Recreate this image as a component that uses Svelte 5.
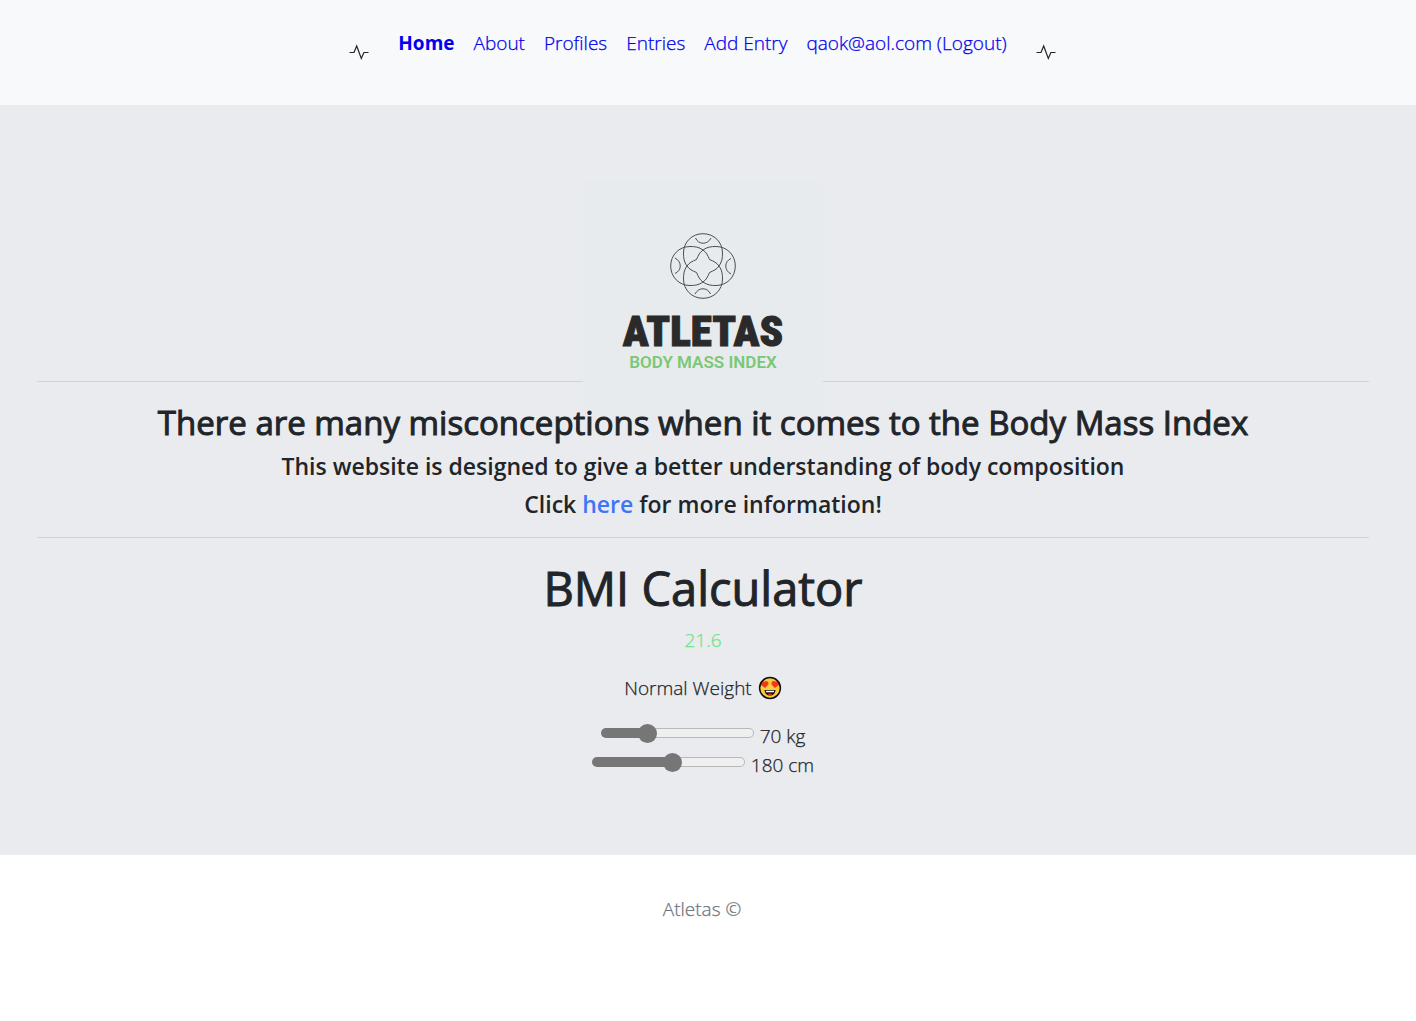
<script>
  let weight = $state(70);
  let height = $state(180);
  let bmi = $derived((weight / (height / 100) ** 2).toFixed(1));
  let fillWeight = $derived(((weight - 30) / 145) * 100);
  let fillHeight = $derived(((height - 100) / 150) * 100);
  const links = ['Home', 'About', 'Profiles', 'Entries', 'Add Entry', 'qaok@aol.com (Logout)'];
</script>

{#snippet pulse()}
  <svg class="pulse" width="20" height="20" viewBox="0 0 20 20" aria-hidden="true">
    <path d="M0.5 10.5H5L7.7 4L12.3 16.5L14.9 10.5H19.5" />
  </svg>
{/snippet}

<header>
  {@render pulse()}
  <nav>
    {#each links as link, i}
      <a href="#{i}" class:active={i === 0}>{link}</a>
    {/each}
  </nav>
  {@render pulse()}
</header>

<main>
  <div class="banner">
    <hr />
    <div class="logo">
      <svg class="mark" width="66" height="66" viewBox="0 0 66 66" aria-hidden="true">
        {#each [0, 90, 180, 270] as turn}
          <g transform="rotate({turn} 33 33)">
            <path d="M17 33C14 29 13.500 25 13.500 20C13.500 9 22 0.700 33 0.700C44 0.700 52.500 9 52.500 20C52.500 25 52 29 49 33" />
            <path d="M25.500 5C28.500 12 37.500 12 41 5" />
            <path d="M33 17C36.500 19.500 37.500 22 39.500 26.500C44 28.500 46.500 29.500 49 33" />
          </g>
        {/each}
      </svg>
      <span class="name">ATLETAS</span>
      <span class="tagline">BODY MASS INDEX</span>
    </div>
  </div>
  <h2>There are many misconceptions when it comes to the Body Mass Index</h2>
  <h4>This website is designed to give a better understanding of body composition</h4>
  <h4>Click <a href="#about">here</a> for more information!</h4>
  <hr class="divider" />
  <h1>BMI Calculator</h1>
  <p class="bmi">{bmi}</p>
  <p class="verdict">
    Normal Weight
    <svg width="24" height="24" viewBox="0 0 24 24" role="img" aria-label="Heart eyes">
      <circle cx="12" cy="12" r="10.200" fill="#ffc83d" />
      <path d="M7.200 12L2.500 8.800C1 6 4 3.500 6.300 5.800C8.500 3.800 11.500 6 10.200 8.800Z" fill="#f03a17" />
      <path d="M16.800 12L21.500 8.800C23 6 20 3.500 17.700 5.800C15.500 3.800 12.500 6 13.800 8.800Z" fill="#f03a17" />
      <path d="M6.500 14H17.500C17.300 17.500 15.200 19.500 12 19.500S6.700 17.500 6.500 14Z" fill="#111" />
      <path d="M7.700 14.800H16.300L15.800 16.300H8.200Z" fill="#fff" />
      <path d="M9.300 18.300Q12 16.800 14.700 18.300Q12 19.800 9.300 18.300Z" fill="#f03a17" />
      <circle cx="12" cy="12" r="10.400" fill="none" stroke="#111" stroke-width="1.500" />
    </svg>
  </p>
  <label class="slider">
    <input type="range" min="30" max="175" bind:value={weight} style:--fill="{fillWeight}%" />
    <span>{weight} kg</span>
  </label>
  <label class="slider">
    <input type="range" min="100" max="250" bind:value={height} style:--fill="{fillHeight}%" />
    <span>{height} cm</span>
  </label>
</main>

<footer>Atletas ©</footer>

<style>
  :global(body) {
    margin: 0;
    background: #fff;
    color: #212529;
    font: 300 19px/28px 'Open Sans', 'Noto Sans', sans-serif;
  }
  header {
    display: flex;
    justify-content: center;
    gap: 29px;
    padding: 29px 11px 43px 0;
    background: #f8f9fb;
  }
  nav { display: flex; gap: 19px; height: 33px; }
  a { color: #0000ee; text-decoration: none; }
  .active { font-weight: 700; }
  .pulse { margin-top: 13px; }
  .pulse path { fill: none; stroke: #212529; stroke-width: 1.200; }
  main {
    padding: 276px 47px 76px 37px;
    background: #eaebef;
    text-align: center;
  }
  hr { margin: 0; border: 0; border-top: 1px solid #d2d4d8; }
  .banner { position: relative; }
  .logo {
    position: absolute;
    left: 50%;
    bottom: -39px;
    display: flex;
    flex-direction: column;
    align-items: center;
    box-sizing: border-box;
    width: 240px;
    height: 240px;
    margin-left: -120px;
    padding-top: 52px;
    background: #e8ebee;
  }
  .mark { flex: none; }
  .mark path { fill: none; stroke: #4c4f52; stroke-width: 1; }
  .name {
    margin-top: 10px;
    color: #2a2a2a;
    font: 900 43px/44px 'Roboto Condensed', Roboto, sans-serif;
    -webkit-text-stroke: 1px;
  }
  .tagline {
    color: #7ac876;
    font: 600 17px/18px Roboto, sans-serif;
  }
  h1, h2, h4 { position: relative; margin: 0; }
  h1, h2 { font-weight: 400; -webkit-text-stroke: 1px; }
  h2 { margin-top: 19px; font-size: 33px; line-height: 44px; }
  h4 { margin-top: 8px; font-size: 23px; font-weight: 600; line-height: 30px; }
  h2 + h4 { margin-top: 6px; }
  h4 a { color: #3d76f7; }
  .divider { margin-top: 18px; }
  h1 { margin-top: 21px; font-size: 47px; line-height: 58px; }
  p { margin: 0; }
  nav a:not(.active), p, .slider, footer { -webkit-text-stroke: 0.25px; }
  .bmi { margin-top: 9px; color: #6be585; }
  .verdict {
    display: flex;
    justify-content: center;
    align-items: center;
    gap: 6px;
    margin: 20px 0 19px;
  }
  .slider { display: flex; justify-content: center; gap: 6px; height: 29px; }
  .slider span { padding-top: 1px; }
  input {
    appearance: none;
    width: 153px;
    height: 10px;
    margin: 7px 0 0;
    box-sizing: border-box;
    border: 1px solid transparent;
    border-radius: 5px;
    background:
      linear-gradient(#767676, #767676) 0 0 / var(--fill) 100% no-repeat border-box,
      linear-gradient(#efefef, #efefef) padding-box,
      linear-gradient(#b9b9b9, #b9b9b9) border-box;
  }
  input::-webkit-slider-thumb {
    appearance: none;
    width: 19px;
    height: 19px;
    border-radius: 50%;
    background: #767676;
  }
  footer { padding: 40px 12px 40px 0; color: #6c757d; text-align: center; }
</style>
